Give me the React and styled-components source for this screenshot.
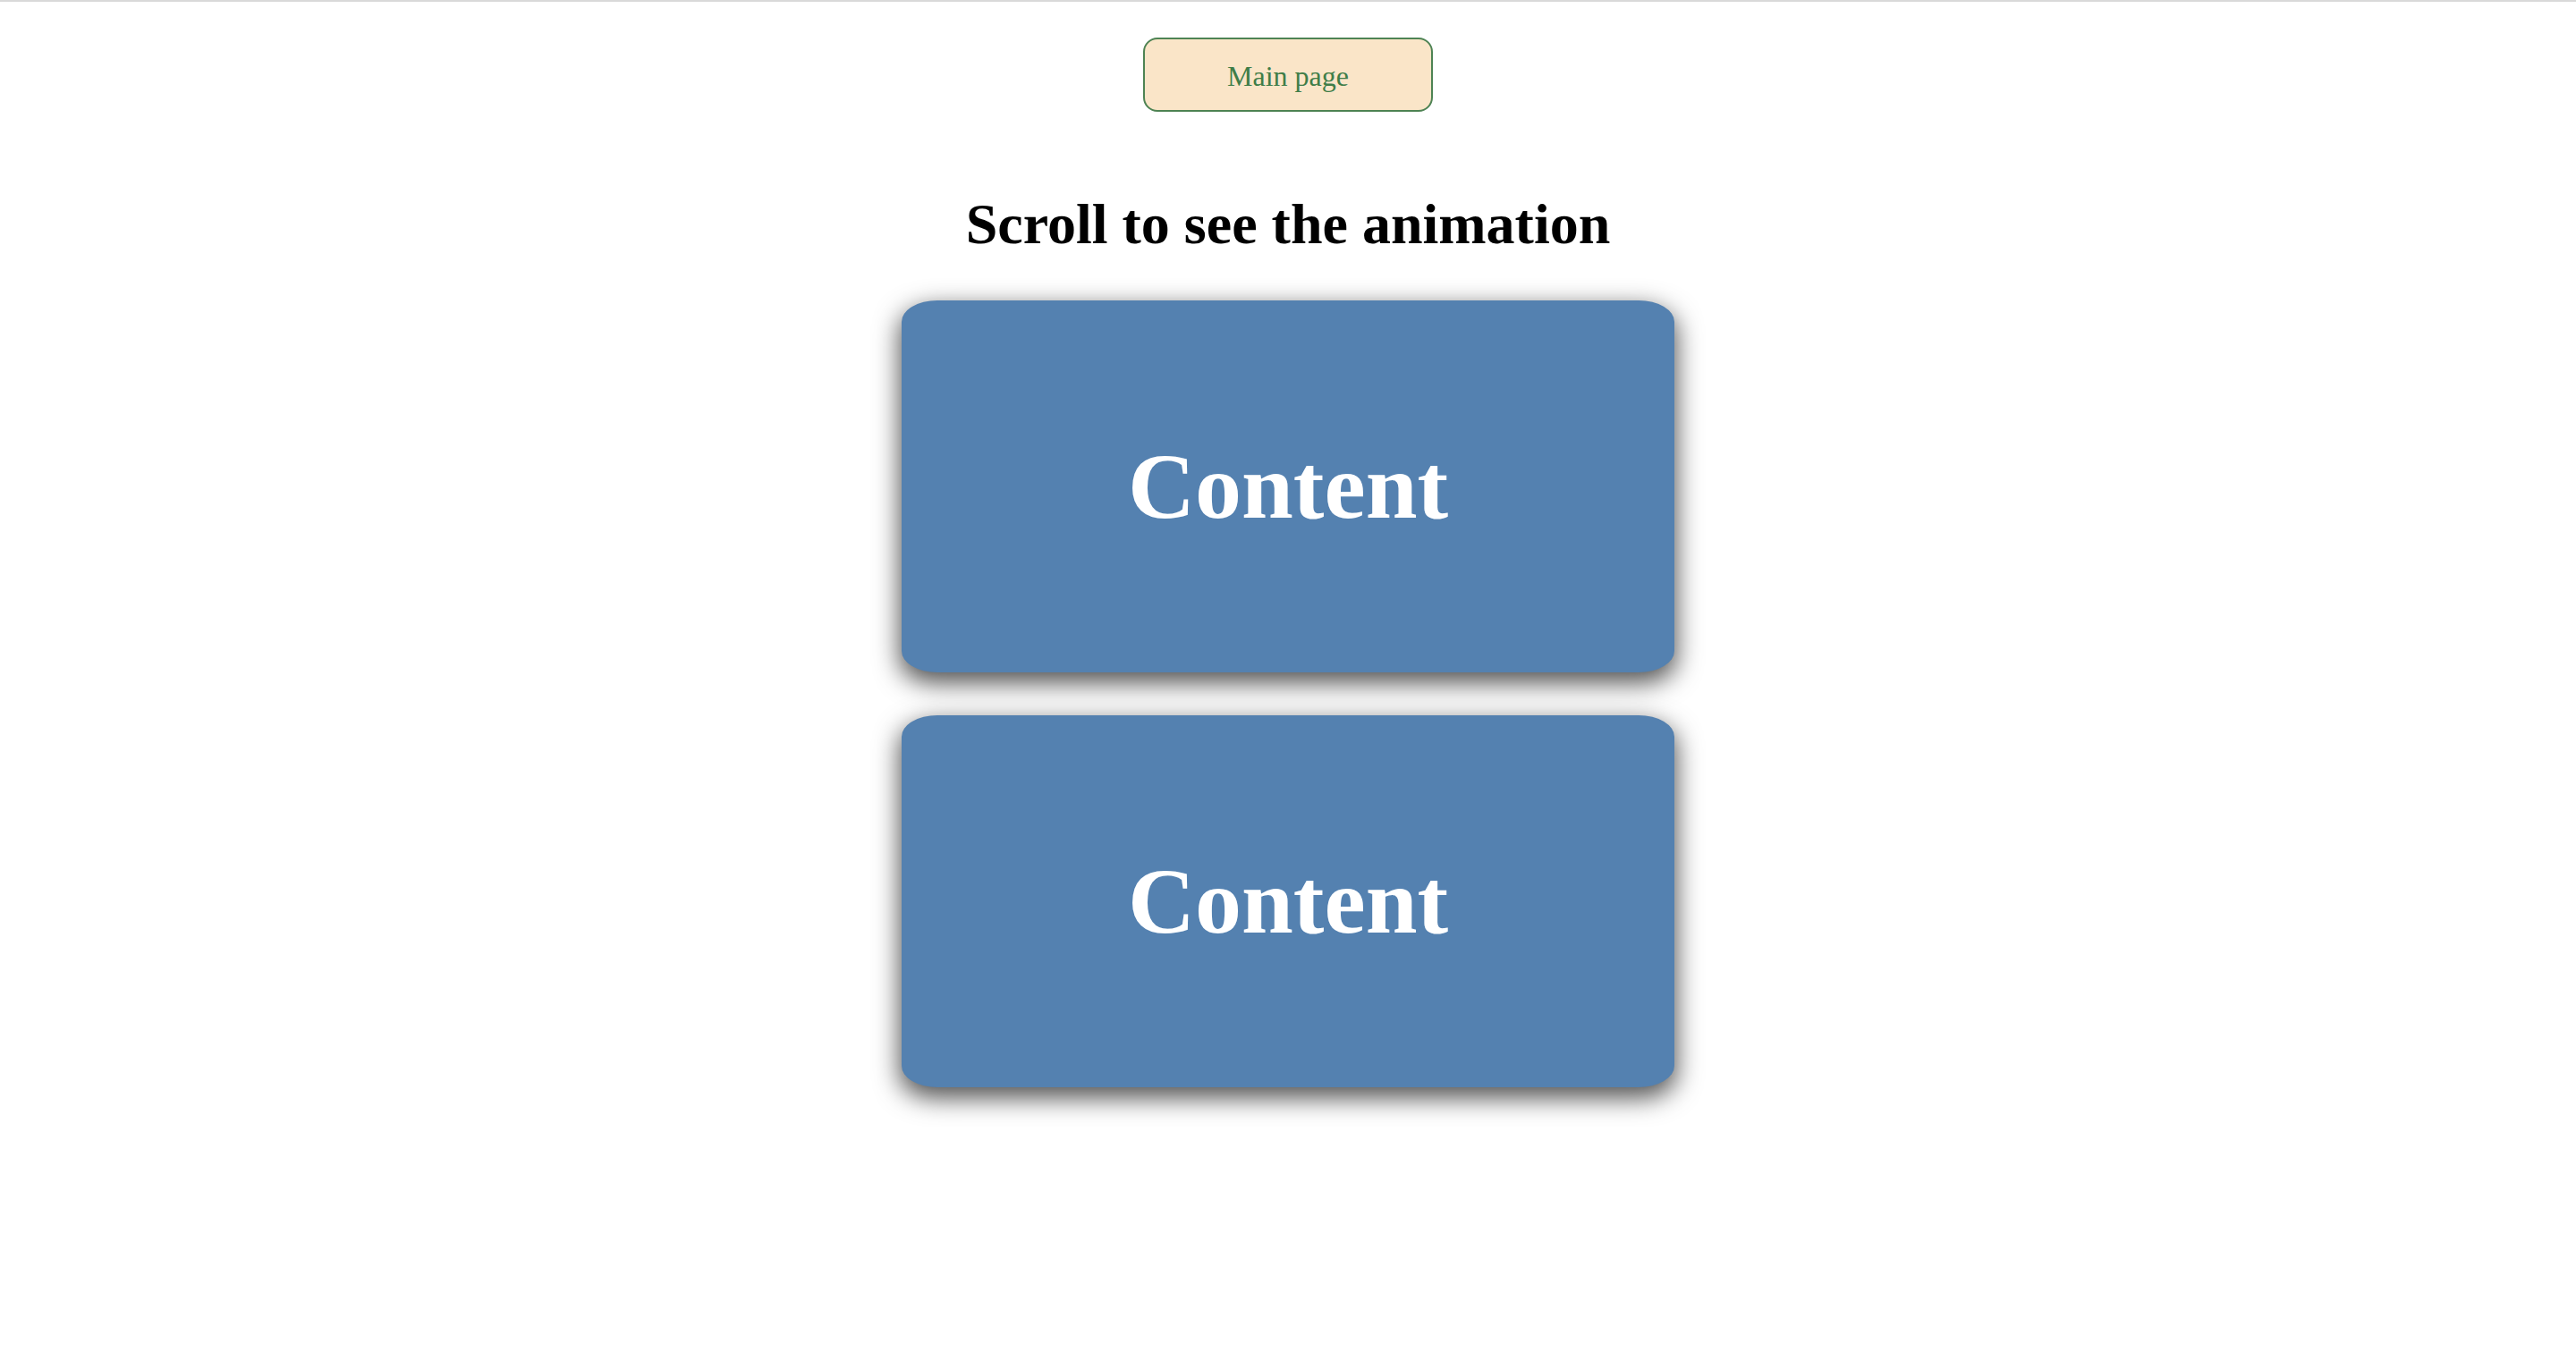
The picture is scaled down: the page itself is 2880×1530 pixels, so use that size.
import React from "react";
import styled, { createGlobalStyle } from "styled-components";

const GlobalStyle = createGlobalStyle`
	html, body {
		margin: 0;
		padding: 0;
		background: #fff;
	}
	body {
		font-family: "Liberation Serif", "Times New Roman", serif;
		border-top: 2px solid #d9d9d9;
	}
`;

const Page = styled.div`
	display: flex;
	flex-direction: column;
	align-items: center;
	padding-top: 40px;
	padding-bottom: 120px;
`;

const NavButton = styled.button`
	width: 324px;
	height: 83px;
	padding-top: 4px;
	background-color: #fae5c8;
	border: 2px solid #4e8353;
	border-radius: 16px;
	color: #3f7d48;
	font-family: "Liberation Serif", "Times New Roman", serif;
	font-size: 32px;
	cursor: pointer;
`;

const Title = styled.h1`
	margin: 89px 0 48px;
	font-size: 64px;
	line-height: 74px;
	font-weight: 700;
	color: #000;
`;

const Cards = styled.div`
	display: flex;
	flex-direction: column;
	gap: 48px;
	width: 864px;
`;

const Card = styled.div`
	height: 416px;
	display: flex;
	align-items: center;
	justify-content: center;
	background-color: #5481b0;
	border-radius: 40px / 24px;
	box-shadow: 0 10px 28px 2px rgba(0, 0, 0, 0.68);
`;

const CardText = styled.span`
	color: #fff;
	font-size: 104px;
	font-weight: 700;
	line-height: 1;
`;

const items = ["Content", "Content"];

const App = () => (
	<React.Fragment>
		<GlobalStyle />
		<Page>
			<NavButton>Main page</NavButton>
			<Title>Scroll to see the animation</Title>
			<Cards>
				{items.map((text, i) => (
					<Card key={i}>
						<CardText>{text}</CardText>
					</Card>
				))}
			</Cards>
		</Page>
	</React.Fragment>
);

export default App;
